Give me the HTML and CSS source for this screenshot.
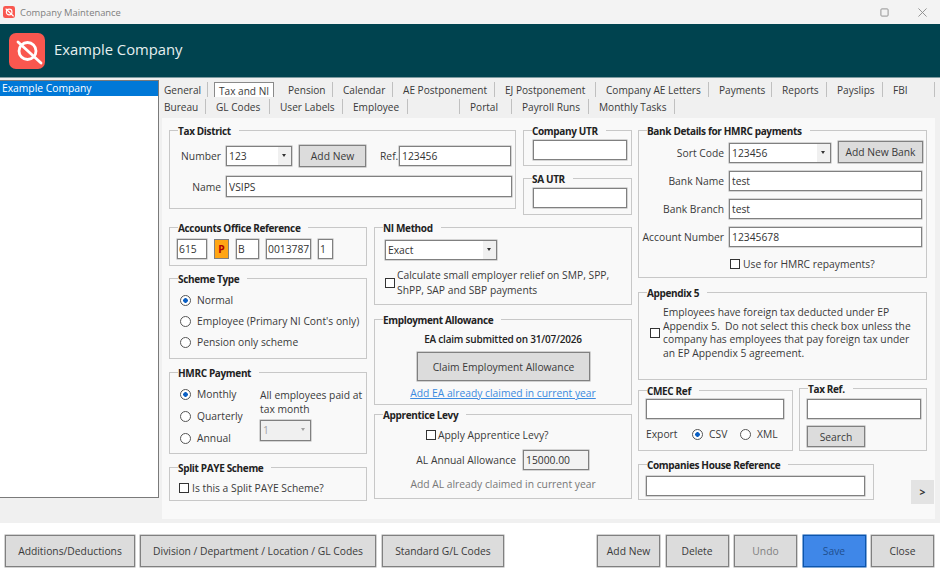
FILE: index.html
```html
<!DOCTYPE html>
<html lang="en">
  <head>
    <meta charset="UTF-8" />
    <title>Company Maintenance</title>
    <link rel="stylesheet" href="styles.css">
  </head>
  <body>
    <!-- Title bar -->
    <div class="titlebar">
      <svg class="title-icon" viewBox="0 0 36 36"><rect width="36" height="36" rx="7" fill="#f9574f"/><circle cx="18.5" cy="18" r="8.5" fill="none" stroke="#fff" stroke-width="3.4"/><path d="M9 9 L31 30" stroke="#fff" stroke-width="3.4" stroke-linecap="round"/></svg>
      <span class="title-text">Company Maintenance</span>
      <div class="window-controls">
        <svg viewBox="0 0 10 10"><rect x="1" y="1" width="8" height="8" rx="1" fill="none" stroke="#8a8a8a"/></svg>
        <svg viewBox="0 0 10 10"><path d="M0.5 0.5 L9.5 9.5 M9.5 0.5 L0.5 9.5" stroke="#8a8a8a"/></svg>
      </div>
    </div>

    <!-- Header -->
    <div class="header">
      <svg class="logo" viewBox="0 0 36 36"><rect width="36" height="36" rx="7" fill="#f9574f"/><circle cx="18.5" cy="18" r="8.5" fill="none" stroke="#fff" stroke-width="2.8"/><path d="M9 9 L32 30" stroke="#fff" stroke-width="2.8" stroke-linecap="round"/></svg>
      <span class="header-title">Example Company</span>
    </div>

    <!-- Main -->
    <div class="main">
      <div class="company-list">
        <div class="company-row">Example Company</div>
      </div>

      <div class="content">
        <div class="tabs">
          <div class="tab-row">
            <a class="tab tab-general">General</a>
            <a class="tab tab-active">Tax and NI</a>
            <a class="tab tab-pension">Pension</a>
            <a class="tab tab-calendar">Calendar</a>
            <a class="tab tab-ae">AE Postponement</a>
            <a class="tab tab-ej">EJ Postponement</a>
            <a class="tab tab-letters">Company AE Letters</a>
            <a class="tab tab-payments">Payments</a>
            <a class="tab tab-reports">Reports</a>
            <a class="tab tab-payslips">Payslips</a>
            <a class="tab tab-fbi">FBI</a>
          </div>
          <div class="tab-row">
            <a class="tab tab-bureau">Bureau</a>
            <a class="tab tab-gl">GL Codes</a>
            <a class="tab tab-labels">User Labels</a>
            <a class="tab tab-employee">Employee</a>
            <a class="tab tab-blank"></a>
            <a class="tab tab-portal">Portal</a>
            <a class="tab tab-runs">Payroll Runs</a>
            <a class="tab tab-tasks">Monthly Tasks</a>
          </div>
        </div>

        <div class="panel">
          <div class="left-block">
            <div class="top-row">
              <div class="group tax-district">
                <div class="group-title">Tax District</div>
                <div class="row row-number">
                  <label class="label label-tax">Number</label>
                  <div class="combo combo-district"><span class="combo-value">123</span><span class="combo-arrow"></span></div>
                  <button class="btn btn-add-district">Add New</button>
                  <label class="label-ref">Ref.</label>
                  <input class="input input-ref" value="123456">
                </div>
                <div class="row row-name">
                  <label class="label label-tax">Name</label>
                  <input class="input input-name" value="VSIPS">
                </div>
              </div>
              <div class="utr-col">
                <div class="group company-utr">
                  <div class="group-title">Company UTR</div>
                  <input class="input input-utr">
                </div>
                <div class="group sa-utr">
                  <div class="group-title">SA UTR</div>
                  <input class="input input-utr">
                </div>
              </div>
            </div>

            <div class="bottom-row">
              <div class="col-one">
                <div class="group accounts-office">
                  <div class="group-title">Accounts Office Reference</div>
                  <div class="row office-inputs">
                    <input class="input office-1" value="615">
                    <div class="office-p">P</div>
                    <input class="input office-3" value="B">
                    <input class="input office-4" value="0013787">
                    <input class="input office-5" value="1">
                  </div>
                </div>

                <div class="group scheme-type">
                  <div class="group-title">Scheme Type</div>
                  <div class="radio-list">
                    <label class="radio-row"><input type="radio" name="scheme" checked>Normal</label>
                    <label class="radio-row"><input type="radio" name="scheme">Employee (Primary NI Cont's only)</label>
                    <label class="radio-row"><input type="radio" name="scheme">Pension only scheme</label>
                  </div>
                </div>

                <div class="group hmrc-payment">
                  <div class="group-title">HMRC Payment</div>
                  <div class="hmrc-body">
                    <div class="radio-list hmrc-radios">
                      <label class="radio-row"><input type="radio" name="pay" checked>Monthly</label>
                      <label class="radio-row"><input type="radio" name="pay">Quarterly</label>
                      <label class="radio-row"><input type="radio" name="pay">Annual</label>
                    </div>
                    <div class="hmrc-month">
                      <div class="hmrc-text">All employees paid at tax month</div>
                      <div class="combo combo-disabled"><span class="combo-value">1</span><span class="combo-arrow"></span></div>
                    </div>
                  </div>
                </div>

                <div class="group split-paye">
                  <div class="group-title">Split PAYE Scheme</div>
                  <label class="check-row split-check"><input type="checkbox">Is this a Split PAYE Scheme?</label>
                </div>
              </div>

              <div class="col-two">
                <div class="group ni-method">
                  <div class="group-title">NI Method</div>
                  <div class="combo combo-ni"><span class="combo-value">Exact</span><span class="combo-arrow"></span></div>
                  <label class="check-row ni-check"><input type="checkbox"><span>Calculate small employer relief on SMP, SPP, ShPP, SAP and SBP payments</span></label>
                </div>

                <div class="group employment-allowance">
                  <div class="group-title">Employment Allowance</div>
                  <div class="ea-note">EA claim submitted on 31/07/2026</div>
                  <button class="btn btn-claim">Claim Employment Allowance</button>
                  <a class="ea-link" href="#">Add EA already claimed in current year</a>
                </div>

                <div class="group apprentice-levy">
                  <div class="group-title">Apprentice Levy</div>
                  <label class="check-row levy-check"><input type="checkbox">Apply Apprentice Levy?</label>
                  <div class="row levy-row">
                    <label class="levy-label">AL Annual Allowance</label>
                    <input class="input input-levy" value="15000.00">
                  </div>
                  <div class="levy-note">Add AL already claimed in current year</div>
                </div>
              </div>
            </div>
          </div>

          <div class="right-block">
            <div class="group bank-details">
              <div class="group-title">Bank Details for HMRC payments</div>
              <div class="row row-sort">
                <label class="label label-bank">Sort Code</label>
                <div class="combo combo-sort"><span class="combo-value">123456</span><span class="combo-arrow"></span></div>
                <button class="btn btn-add-bank">Add New Bank</button>
              </div>
              <div class="row row-bank">
                <label class="label label-bank">Bank Name</label>
                <input class="input input-bank" value="test">
              </div>
              <div class="row row-bank">
                <label class="label label-bank">Bank Branch</label>
                <input class="input input-bank" value="test">
              </div>
              <div class="row row-bank">
                <label class="label label-bank">Account Number</label>
                <input class="input input-bank" value="12345678">
              </div>
              <label class="check-row repay-check"><input type="checkbox">Use for HMRC repayments?</label>
            </div>

            <div class="group appendix">
              <div class="group-title">Appendix 5</div>
              <label class="check-row appendix-check"><input type="checkbox"><span>Employees have foreign tax deducted under EP Appendix 5.&nbsp; Do not select this check box unless the company has employees that pay foreign tax under an EP Appendix 5 agreement.</span></label>
            </div>

            <div class="ref-row">
              <div class="group cmec">
                <div class="group-title">CMEC Ref</div>
                <input class="input input-cmec">
                <div class="row export-row">
                  <span class="export-label">Export</span>
                  <label class="radio-row export-csv"><input type="radio" name="export" checked>CSV</label>
                  <label class="radio-row"><input type="radio" name="export">XML</label>
                </div>
              </div>
              <div class="group tax-ref">
                <div class="group-title">Tax Ref.</div>
                <input class="input input-taxref">
                <button class="btn btn-search">Search</button>
              </div>
            </div>

            <div class="house-row">
              <div class="group companies-house">
                <div class="group-title">Companies House Reference</div>
                <input class="input input-house">
              </div>
              <button class="next-btn">&gt;</button>
            </div>
          </div>
        </div>
      </div>
    </div>

    <!-- Footer buttons -->
    <div class="footer">
      <div class="footer-group">
        <button class="btn btn-footer btn-additions">Additions/Deductions</button>
        <button class="btn btn-footer btn-division">Division / Department / Location / GL Codes</button>
        <button class="btn btn-footer btn-standard">Standard G/L Codes</button>
      </div>
      <div class="footer-group footer-actions">
        <button class="btn btn-footer btn-action">Add New</button>
        <button class="btn btn-footer btn-action">Delete</button>
        <button class="btn btn-footer btn-action btn-disabled">Undo</button>
        <button class="btn btn-footer btn-action btn-save">Save</button>
        <button class="btn btn-footer btn-action">Close</button>
      </div>
    </div>
  </body>
</html>
```

FILE: styles.css
```css
* {
  box-sizing: border-box;
}

html,
body {
  margin: 0;
  padding: 0;
  height: 577px;
  overflow: hidden;
  background-color: #fff;
}

body {
  font-family: "Open Sans", "Noto Sans", sans-serif;
  font-size: 10.3px;
  color: #3a3a3a;
}

/* Title bar */
.titlebar {
  display: flex;
  align-items: center;
  height: 24px;
  padding-left: 3px;
  background-color: #f3f3f3;
}

.title-icon {
  width: 12px;
  height: 12px;
}

.title-text {
  margin-left: 5px;
  font-size: 9.4px;
  color: #808080;
}

.window-controls {
  display: flex;
  gap: 29px;
  margin-left: auto;
  margin-right: 13px;
}

.window-controls svg {
  width: 9px;
  height: 9px;
}

/* Header */
.header {
  display: flex;
  align-items: center;
  height: 54px;
  padding-left: 9px;
  background-color: #00434f;
  border-bottom: 1px solid #7f9ca1;
}

.logo {
  width: 36px;
  height: 36px;
}

.header-title {
  margin: 0 0 3px 9px;
  font-size: 14.8px;
  color: #e6f0f0;
}

/* Main area */
.main {
  display: flex;
  align-items: flex-start;
  height: 445px;
  background-color: #f0f0f0;
}

.company-list {
  width: 159px;
  height: 418px;
  margin-top: 2px;
  background-color: #fff;
  border: 1px solid #7a7a7a;
  border-left: none;
}

.company-row {
  height: 15px;
  padding-left: 2px;
  line-height: 15px;
  color: #fff;
  background-color: #0078d7;
}

.content {
  width: 778px;
  margin-left: 3px;
}

/* Tabs */
.tabs {
  height: 40px;
  padding-top: 4px;
}

.tab-row {
  display: flex;
  height: 17px;
  padding-left: 2px;
}

.tab {
  display: block;
  height: 15px;
  line-height: 17px;
  padding-left: 10px;
  font-size: 10.1px;
  border-right: 1px solid #c0c0c0;
}

.tab-general { width: 44px; padding-left: 0; }
.tab-active {
  width: 60px;
  margin: 0 4px 0 6px;
  padding: 0 0 0 4px;
  background-color: #fff;
  border: 1px solid #8a8a8a;
  border-bottom: none;
}
.tab-pension { width: 55px; }
.tab-calendar { width: 60px; }
.tab-ae { width: 102px; }
.tab-ej { width: 101px; }
.tab-letters { width: 113px; }
.tab-payments { width: 63px; }
.tab-reports { width: 55px; }
.tab-payslips { width: 56px; }
.tab-fbi { width: 52px; }
.tab-bureau { width: 42px; padding-left: 0; }
.tab-gl { width: 64px; }
.tab-labels { width: 73px; }
.tab-employee { width: 65px; }
.tab-blank { width: 52px; }
.tab-portal { width: 52px; }
.tab-runs { width: 77px; }
.tab-tasks { width: 86px; }

/* Form panel */
.panel {
  display: flex;
  gap: 6px;
  width: 773px;
  height: 401px;
  padding: 12px 0 0 7px;
  background-color: #f9f9f9;
}

.left-block {
  width: 463px;
}

.right-block {
  width: 289px;
}

.top-row,
.bottom-row {
  display: flex;
  gap: 7px;
}

.bottom-row {
  margin-top: 12px;
}

.row {
  display: flex;
  align-items: center;
}

/* Group boxes */
.group {
  border: 1px solid #c8c8c8;
}

.group-title {
  width: fit-content;
  height: 14px;
  margin: -8px 0 0 8px;
  padding: 0 8px 0 0;
  line-height: 16px;
  font-size: 10px;
  font-weight: 700;
  letter-spacing: -0.35px;
  color: #222;
  background-color: #f9f9f9;
}

.tax-district {
  width: 347px;
  height: 79px;
}

.utr-col {
  width: 109px;
}

.company-utr {
  height: 36px;
}

.sa-utr {
  height: 37px;
  margin-top: 12px;
}

.col-one {
  width: 198px;
}

.col-two {
  width: 258px;
}

.accounts-office {
  height: 39px;
}

.scheme-type {
  height: 81px;
  margin-top: 12px;
}

.hmrc-payment {
  height: 82px;
  margin-top: 13px;
}

.split-paye {
  height: 34px;
  margin-top: 13px;
}

.ni-method {
  height: 78px;
}

.employment-allowance {
  height: 86px;
  margin-top: 14px;
}

.apprentice-levy {
  height: 85px;
  margin-top: 9px;
}

.bank-details {
  height: 148px;
}

.appendix {
  height: 88px;
  margin-top: 14px;
}

.ref-row {
  display: flex;
  align-items: flex-end;
  gap: 6px;
  margin-top: 8px;
}

.cmec {
  width: 155px;
  height: 61px;
}

.tax-ref {
  width: 128px;
  height: 63px;
}

.house-row {
  display: flex;
  align-items: flex-end;
  justify-content: space-between;
  margin: 13px -7px 0 0;
}

.companies-house {
  width: 236px;
  height: 36px;
}

/* Inputs */
.input {
  display: block;
  height: 20px;
  padding: 0 2px;
  font: inherit;
  color: #333;
  background-color: #fff;
  border: 1px solid #808080;
  border-radius: 0;
  box-shadow: 0 0 0 0.5px #b0b0b0;
  outline: none;
}

.combo {
  display: flex;
  height: 20px;
  line-height: 18px;
  background-color: #fff;
  border: 1px solid #808080;
  box-shadow: 0 0 0 0.5px #b0b0b0;
}

.combo-value {
  flex: 1;
  padding-left: 2px;
  color: #333;
}

.combo-arrow {
  position: relative;
  width: 13px;
  background-color: #f0f0f0;
}

.combo-arrow::after {
  content: "";
  position: absolute;
  top: 7px;
  left: 4px;
  border-top: 3px solid #333;
  border-left: 2.5px solid transparent;
  border-right: 2.5px solid transparent;
}

.combo-disabled {
  width: 51px;
  height: 21px;
  margin-top: 4px;
  background-color: #f0f0f0;
}

.combo-disabled .combo-value {
  color: #a0a0a0;
}

.combo-disabled .combo-arrow::after {
  border-top-color: #a0a0a0;
}

/* Buttons */
.btn {
  display: block;
  padding: 0;
  font: inherit;
  color: #3a3a3a;
  background-color: #dcdcdc;
  border: 1px solid #808080;
  box-shadow: 0 0 0 0.5px #a8a8a8;
}

.btn-add-district {
  width: 67px;
  height: 22px;
  margin-left: 7px;
}

.btn-add-bank {
  width: 85px;
  height: 22px;
  margin: -2px 0 0 7px;
}

.btn-claim {
  width: 173px;
  height: 29px;
  margin: 6px 0 0 42px;
}

.btn-search {
  width: 58px;
  height: 21px;
  margin: 7px 0 0 7px;
}

/* Checkboxes and radios */
input[type="checkbox"],
input[type="radio"] {
  appearance: none;
  flex: none;
  margin: 0;
  background-color: #fff;
}

input[type="checkbox"] {
  width: 10px;
  height: 10px;
  border: 1px solid #333;
}

input[type="radio"] {
  width: 11px;
  height: 11px;
  border: 1px solid #555;
  border-radius: 50%;
}

input[type="radio"]:checked {
  background: radial-gradient(circle, #0a5fc4 0 2px, #fff 2.6px);
  border-color: #555;
}

.check-row {
  display: flex;
  align-items: center;
  gap: 3px;
}

.radio-row {
  display: flex;
  align-items: center;
  gap: 6px;
  height: 14px;
}

.radio-list {
  display: flex;
  flex-direction: column;
  gap: 7px;
  padding: 8px 0 0 10px;
}

/* Tax district */
.row-number {
  margin-top: 8px;
}

.row-name {
  margin-top: 9px;
}

.label {
  flex: none;
  text-align: right;
}

.label-tax {
  width: 51px;
  margin-right: 5px;
}

.combo-district {
  width: 66px;
}

.label-ref {
  margin-left: 14px;
  width: 19px;
}

.input-ref {
  width: 112px;
}

.input-name {
  width: 286px;
  height: 21px;
}

.input-utr {
  width: 94px;
  margin: 3px 0 0 9px;
}

/* Accounts office */
.office-inputs {
  gap: 7px;
  margin-top: 5px;
  padding-left: 7px;
}

.office-inputs .input {
  padding: 0 1px;
}

.office-1 {
  width: 30px;
}

.office-p {
  width: 15px;
  height: 20px;
  line-height: 18px;
  text-align: center;
  font-weight: 700;
  color: #b00000;
  background-color: #ffa514;
  border: 1px solid #808080;
}

.office-3 {
  width: 23px;
}

.office-4 {
  width: 45px;
}

.office-5 {
  width: 15px;
}

/* HMRC payment */
.hmrc-body {
  display: flex;
}

.hmrc-radios {
  width: 90px;
  gap: 8px;
}

.hmrc-month {
  width: 106px;
  padding-top: 9px;
}

.hmrc-text {
  line-height: 14px;
}

.split-check {
  margin: 7px 0 0 9px;
}

/* NI method */
.combo-ni {
  width: 112px;
  margin: 6px 0 0 10px;
}

.ni-check {
  gap: 2px;
  margin: 8px 0 0 10px;
}

.ni-check span {
  line-height: 15px;
}

/* Employment allowance */
.ea-note {
  margin-top: 6px;
  height: 14px;
  line-height: 14px;
  text-align: center;
  font-size: 10px;
  font-weight: 600;
  letter-spacing: -0.2px;
  color: #222;
}

.ea-link {
  display: block;
  margin-top: 5px;
  line-height: 14px;
  text-align: center;
  color: #3c8be0;
}

/* Apprentice levy */
.levy-check {
  gap: 2px;
  margin: 7px 0 0 51px;
}

.levy-row {
  margin-top: 8px;
}

.levy-label {
  width: 141px;
  text-align: right;
}

.input-levy {
  width: 66px;
  margin-left: 7px;
  background-color: #f2f2f2;
}

.levy-note {
  margin-top: 7px;
  line-height: 14px;
  text-align: center;
  color: #777;
}

/* Bank details */
.row-sort {
  margin-top: 6px;
}

.row-bank {
  margin-top: 8px;
}

.label-bank {
  width: 85px;
  margin-right: 5px;
}

.combo-sort {
  width: 102px;
}

.input-bank {
  width: 193px;
}

.repay-check {
  margin: 10px 0 0 91px;
}

/* Appendix */
.appendix-check {
  margin: 7px 0 0 11px;
  align-items: center;
}

.appendix-check span {
  width: 250px;
  line-height: 13.7px;
}

/* CMEC and tax ref */
.input-cmec {
  width: 138px;
  margin: 2px 0 0 7px;
}

.export-row {
  margin: 8px 0 0 7px;
}

.export-label {
  width: 46px;
}

.export-csv {
  width: 48px;
}

.input-taxref {
  width: 114px;
  margin: 4px 0 0 7px;
}

.input-house {
  width: 219px;
  margin: 5px 0 0 7px;
}

.next-btn {
  width: 23px;
  height: 24px;
  margin-bottom: -4px;
  padding: 0;
  font: inherit;
  font-weight: 700;
  color: #333;
  background-color: #e3e3e3;
  border: none;
}

/* Footer */
.footer {
  display: flex;
  justify-content: space-between;
  height: 54px;
  padding: 12px 6px 0 5px;
}

.footer-group {
  display: flex;
  gap: 5px;
}

.footer-actions {
  gap: 5.5px;
}

.btn-footer {
  height: 32px;
}

.btn-additions {
  width: 130px;
}

.btn-division {
  width: 236px;
}

.btn-standard {
  width: 122px;
  margin-left: 1px;
}

.btn-action {
  width: 63px;
}

.btn-disabled {
  color: #808080;
}

.btn-save {
  color: #1f4f8f;
  background-color: #3f87e8;
  border-color: #0b55ad;
  box-shadow: 0 0 0 0.5px #0b55ad;
}
```
